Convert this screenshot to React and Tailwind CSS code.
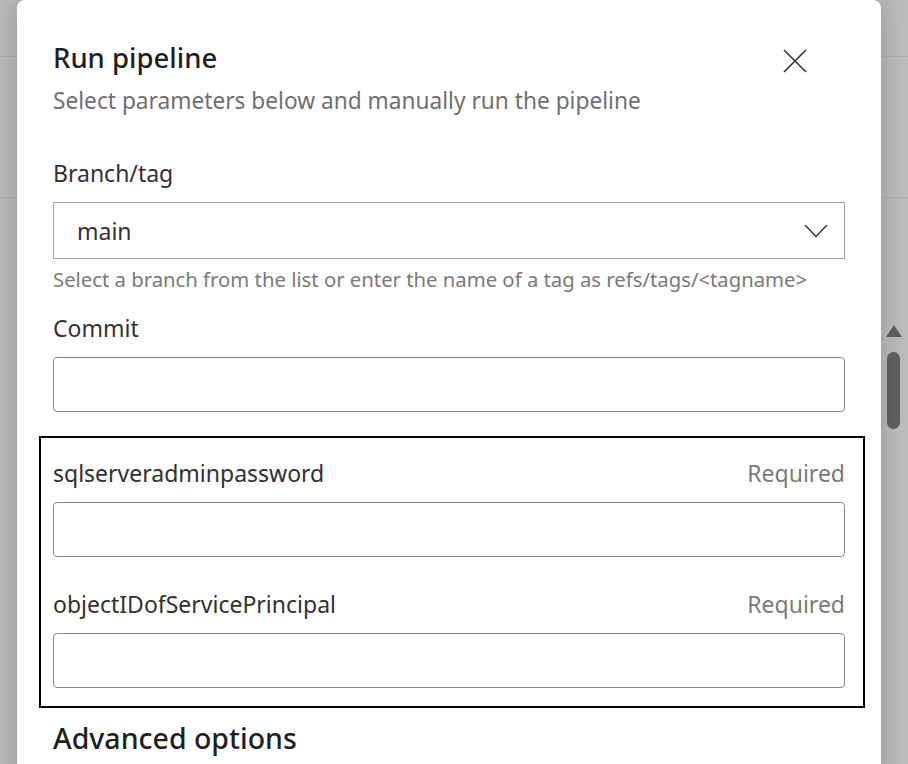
function Field({ label }) {
  return (
    <div>
      <div className="flex h-[30px] items-center justify-between">
        <span className="text-[23px] leading-[30px] text-[#323130]">{label}</span>
        <span className="text-[23px] leading-[30px] text-[#7a7a7a]">Required</span>
      </div>
      <div className="mt-[14px] h-[55px] rounded-[4px] border border-[#8a8886] bg-white" />
    </div>
  );
}

export default function App() {
  return (
    <div
      className="relative h-[764px] w-[908px] overflow-hidden bg-[#bcbcbc]"
      style={{ fontFamily: '"Noto Sans", "Open Sans", sans-serif' }}
    >
      {/* dimmed page behind */}
      <div className="h-[57px] border-b border-[#aeaeae]" />
      <div className="h-[141px] border-b border-[#aeaeae]" />

      {/* scrollbar */}
      <div className="absolute right-[6px] top-[325px] flex w-[17px] flex-col items-center gap-[15px]">
        <div className="h-0 w-0 border-x-[8px] border-b-[12px] border-x-transparent border-b-[#616161]" />
        <div className="h-[77px] w-[13px] rounded-full bg-[#616161]" />
      </div>

      {/* modal */}
      <div className="absolute left-[17px] top-0 h-[790px] w-[864px] rounded-t-[8px] bg-white px-[36px] shadow-[0_0_28px_rgba(0,0,0,0.22)]">
        <div className="flex items-start justify-between pt-[38px]">
          <div>
            <h1 className="text-[27.5px] font-medium leading-[40px] text-[#201f1e]">Run pipeline</h1>
            <p className="mt-[9px] text-[22.7px] leading-[28px] text-[#707070]">
              Select parameters below and manually run the pipeline
            </p>
          </div>
          <button className="mr-[38px] mt-[11px] text-[#323130]">
            <svg width="24" height="24" viewBox="0 0 24 24" fill="none" stroke="currentColor" strokeWidth="1.6">
              <path d="M1 1L23 23M23 1L1 23" />
            </svg>
          </button>
        </div>

        <div className="mt-[43px] h-[30px] text-[23px] leading-[30px] text-[#323130]">Branch/tag</div>
        <div className="mt-[14px] flex h-[57px] items-center justify-between border border-[#a6a6a6] pl-[23px] pr-[16px]">
          <span className="text-[23px] leading-[30px] text-[#323130]">main</span>
          <svg width="24" height="14" viewBox="0 0 24 14" fill="none" stroke="#323130" strokeWidth="1.4">
            <path d="M1 1L12 12.5L23 1" />
          </svg>
        </div>
        <p className="mt-[7px] text-[20.3px] leading-[26px] text-[#7a7a7a]">
          Select a branch from the list or enter the name of a tag as refs/tags/&lt;tagname&gt;
        </p>

        <div className="mt-[21px] h-[30px] text-[23px] leading-[30px] text-[#323130]">Commit</div>
        <div className="mt-[14px] h-[55px] rounded-[4px] border border-[#8a8886]" />

        <div className="-ml-[14px] -mr-[20px] mt-[24px] flex flex-col gap-[32px] border-2 border-black pb-[18px] pl-[12px] pr-[18px] pt-[20px]">
          <Field label="sqlserveradminpassword" />
          <Field label="objectIDofServicePrincipal" />
        </div>

        <h2 className="mt-[10px] text-[28.5px] font-medium leading-[40px] text-[#201f1e]">Advanced options</h2>
      </div>
    </div>
  );
}
